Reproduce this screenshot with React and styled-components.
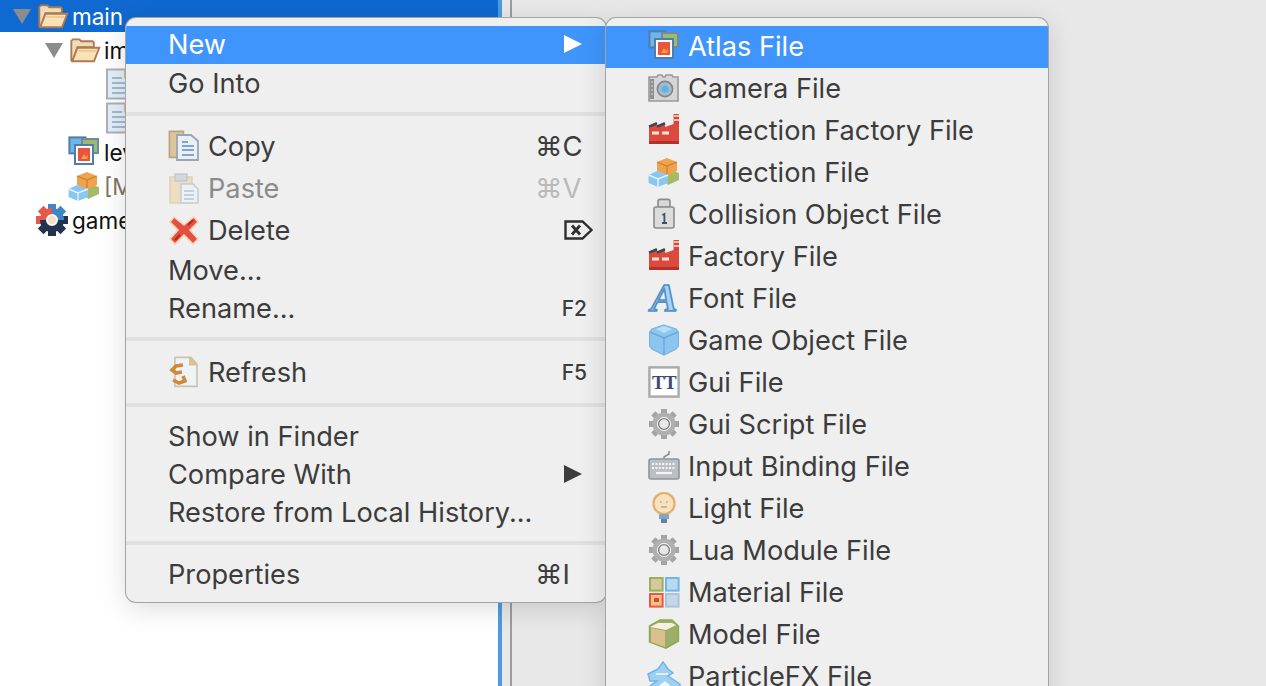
import React from "react";
import styled, { createGlobalStyle } from "styled-components";

const Global = createGlobalStyle`
  html, body { margin: 0; padding: 0; background: #e8e8e8; }
  body { font-family: Inter, "Noto Sans", "DejaVu Sans", sans-serif; }
`;

const Page = styled.div`
  position: relative;
  display: flex;
  width: 1266px;
  height: 686px;
  overflow: hidden;
  background: #e8e8e8;
`;
const TreePanel = styled.div`
  width: 498px;
  height: 100%;
  flex-shrink: 0;
  background: #fff;
  overflow: hidden;
`;
const TreeRow = styled.div`
  display: flex;
  align-items: center;
  gap: 4px;
  height: ${(p) => (p.$selected ? 32 : 34)}px;
  margin-bottom: ${(p) => (p.$selected ? 1 : 0)}px;
  padding-left: ${(p) => p.$indent}px;
  background: ${(p) => (p.$selected ? "#0f69d0" : "transparent")};
  color: ${(p) => (p.$selected ? "#fff" : p.$muted ? "#7d7466" : "#111")};
  font-size: 22.5px;
  white-space: nowrap;
`;
const Twisty = styled.span`
  width: 0;
  height: 0;
  margin-right: 3px;
  border-left: 9px solid transparent;
  border-right: 9px solid transparent;
  border-top: 15px solid #8c8c8c;
`;
const Stripe = styled.div`
  width: 4px;
  flex-shrink: 0;
  background: #4f9ae0;
`;
const Gutter = styled.div`
  width: 8px;
  flex-shrink: 0;
`;
const EditorEdge = styled.div`
  width: 2px;
  flex-shrink: 0;
  background: #9c9c9c;
`;

const Menu = styled.div`
  position: absolute;
  top: 18px;
  left: ${(p) => p.$left}px;
  width: ${(p) => p.$width}px;
  height: ${(p) => p.$height}px;
  box-sizing: border-box;
  padding-top: 8px;
  background: #efefef;
  border-radius: ${(p) => p.$radius};
  box-shadow: 0 0 0 1px #a4a4a4, 0 6px 28px rgba(0, 0, 0, 0.14);
  overflow: hidden;
`;
const Item = styled.div`
  display: flex;
  align-items: center;
  gap: 8px;
  box-sizing: border-box;
  height: ${(p) => p.$h}px;
  padding: 0 24px ${(p) => p.$lift ?? 0}px ${(p) => p.$left}px;
  background: ${(p) => (p.$active ? "#3f95fb" : "transparent")};
  color: ${(p) => (p.$active ? "#fff" : p.$disabled ? "#8b8b8b" : "#3c3c3c")};
  font-size: 27.2px;
  white-space: nowrap;
`;
const Name = styled.span`
  flex: 1;
`;
const Keys = styled.span`
  width: 47px;
  color: ${(p) => (p.$disabled ? "#bababa" : "#3c3c3c")};
  font-size: 27.5px;
`;
const FnKey = styled.span`
  color: #3c3c3c;
  font-size: 21px;
  font-weight: 500;
  margin-right: -5px;
`;
const Arrow = styled.span`
  width: 0;
  height: 0;
  border-top: 9px solid transparent;
  border-bottom: 9px solid transparent;
  border-left: 18px solid ${(p) => (p.$active ? "#fff" : "#3c3c3c")};
`;
const Sep = styled.div`
  height: ${(p) => p.$h}px;
  display: flex;
  align-items: center;
  &::before {
    content: "";
    flex: 1;
    height: 4px;
    background: #e0e0e0;
  }
`;
const Glyph = styled.svg`
  width: ${(p) => p.$size ?? 32}px;
  height: ${(p) => p.$size ?? 32}px;
  flex-shrink: 0;
  overflow: visible;
  opacity: ${(p) => p.$fade ?? 1};
`;
const KeyGlyph = styled(Glyph)`
  margin-right: -12px;
`;

const Icon = ({ children, ...rest }) => (
  <Glyph viewBox="0 0 16 16" {...rest}>
    {children}
  </Glyph>
);

const FolderOpen = (p) => (
  <Icon {...p}>
    <path d="M.7 13.5V3.2l.8-.9h3.5l1 1h6l.7.7v2.5H4L1.500 13.5z" fill="#efdcb8" stroke="#ad7a52" strokeWidth="1" />
    <path d="M1.200 14 4 6.800h11.600L12.800 14z" fill="#f8e2b6" stroke="#ad7a52" strokeWidth="1" />
    <path d="M4.500 8.500h9.500" stroke="#e8c58c" strokeWidth=".8" />
  </Icon>
);
const Doc = (p) => (
  <Icon {...p}>
    <path d="M1.500.7h9l3.500 3.500v11H1.500z" fill="#e6eef5" stroke="#a9b2bb" strokeWidth="1" />
    <path d="M10 .7h1l3 3.500v1h-4z" fill="#d9b98c" />
    <path d="M4 5h5M4 7.500h8M4 10h8M4 12.500h8" stroke="#9dbbd6" strokeWidth="1" />
  </Icon>
);
const Atlas = (p) => (
  <Icon {...p}>
    <rect x=".7" y=".7" width="8" height="8" fill="#6db5ea" stroke="#4e7fa8" />
    <rect x="7" y="1.500" width="8" height="7" fill="#9dbb6c" stroke="#6d89a3" />
    <rect x="3.500" y="4.500" width="9" height="9.500" fill="#fff" stroke="#4e7fa8" strokeWidth="1" />
    <rect x="5" y="6" width="6" height="6.500" fill="#e9543f" />
    <path d="M6.500 11.500 8 9l1 1.500.8-1.500v2.500z" fill="#f3a13c" />
  </Icon>
);
const Camera = (p) => (
  <Icon {...p}>
    <path d="M.5 2.500h4l.5-1h2l.5 1h1l.5-1h3l.5 1h2.500v12H.5z" fill="#d6d6d6" stroke="#999" strokeWidth=".8" />
    <rect x="1" y="3.500" width="2" height="10" fill="#8f8f8f" />
    <path d="M1.500 5h1M1.500 7h1M1.500 9h1M1.500 11h1" stroke="#ddd" strokeWidth=".6" />
    <circle cx="8.500" cy="8.500" r="3.800" fill="#a9bac9" stroke="#7b8793" strokeWidth=".8" />
    <circle cx="8.500" cy="8.500" r="1.800" fill="#5fb0ee" />
  </Icon>
);
const Factory = (p) => (
  <Icon {...p}>
    <path d="M12.800 0h2.700v6h-2.700z" fill="#d8433a" />
    <path d="M13 1h2.500M13 3h2.500" stroke="#f0c2a6" strokeWidth=".9" />
    <path d="M.5 6.500l4-1.500v1.500l4-1.500v1.500l4.300-1.500h2.700v10H.5z" fill="#dc4a3d" />
    <path d="M.5 6.300l4-1.700M4.500 6.300l4-1.700" stroke="#3f4650" strokeWidth="1.300" />
    <path d="M2 9.500h3.500M7 9.500h3.500" stroke="#fbe7d6" strokeWidth="1.600" />
    <rect x=".5" y="13.500" width="15" height="1.500" fill="#b03228" />
  </Icon>
);
const Boxes = (p) => (
  <Icon {...p}>
    <path d="M7 9.500 12 7.500l3.500 1v3.500L10 14.500z" fill="#a3bb63" />
    <path d="M4.500 3 9.500 1l5 2v4.500L9.500 10 4.500 7.500z" fill="#f0a24d" />
    <path d="M4.500 3 9.500 5l5-2M9.500 5v5" stroke="#c97f30" strokeWidth=".6" fill="none" />
    <path d="M.3 9.500 4.500 7.500 10 9.500v4l-5 2-4.700-2z" fill="#8ac6f2" />
    <path d="M.3 9.500 5 11.500 10 9.500M5 11.500v4" stroke="#e6f3fc" strokeWidth=".7" fill="none" />
  </Icon>
);
const Weight = (p) => (
  <Icon {...p}>
    <rect x="5" y=".7" width="6" height="4" rx="1" fill="#d8d8d8" stroke="#8b8b8b" strokeWidth=".8" />
    <rect x="3" y="4.500" width="10" height="10.500" rx="1" fill="#dcdcdc" stroke="#8b8b8b" strokeWidth=".8" />
    <path d="M7.200 8.500 8.200 8v4.500M7 12.500h2.500" stroke="#3f5169" strokeWidth=".9" fill="none" />
  </Icon>
);
const FontIcon = (p) => (
  <Icon {...p}>
    <text x="8" y="14.500" textAnchor="middle" fontFamily="'Liberation Serif', serif" fontStyle="italic" fontWeight="700" fontSize="20" fill="#a9d3f2" stroke="#4f8fc4" strokeWidth=".8">
      A
    </text>
  </Icon>
);
const Cube = (p) => (
  <Icon {...p}>
    <path d="M8 .5 14 2.500l1.200 1.500v7L14 12.500 8 15.500 2 12.500.8 11V4L2 2.500z" fill="#8cc6f0" stroke="#78b4e2" strokeWidth=".6" />
    <path d="M1 4 8 7l7-3M8 7v8.500" stroke="#6aa9dc" strokeWidth=".7" fill="none" />
    <path d="M4 2.500 8 1l4 1.500L8 4.500z" fill="#b7ddf7" />
  </Icon>
);
const GuiIcon = (p) => (
  <Icon {...p}>
    <rect x=".7" y=".7" width="14.600" height="14.600" fill="#fff" stroke="#a9a9a9" strokeWidth="1.200" />
    <text x="8" y="11.500" textAnchor="middle" fontFamily="'Liberation Serif', serif" fontWeight="700" fontSize="9.500" letterSpacing="-.3" fill="#3d4a78">
      TT
    </text>
  </Icon>
);
const Gear = (p) => (
  <Icon {...p}>
    {[0, 45, 90, 135, 180, 225, 270, 315].map((a) => (
      <rect key={a} x="6.500" y=".5" width="3" height="4" fill="#a4a4a4" transform={`rotate(${a} 8 8)`} />
    ))}
    <circle cx="8" cy="8" r="4.700" fill="none" stroke="#b0b0b0" strokeWidth="2.200" />
    <circle cx="8" cy="8" r="2.700" fill="#e8e8e8" stroke="#808080" strokeWidth=".7" />
  </Icon>
);
const Keyboard = (p) => (
  <Icon {...p}>
    <path d="M8 5V3.500L10.500 2V.5" stroke="#8f8f8f" fill="none" strokeWidth=".8" />
    <rect x=".5" y="4.500" width="15" height="10" rx="1" fill="#b9bfc5" stroke="#8f959b" strokeWidth=".8" />
    <path d="M2 7h12M2 9h12" stroke="#f4f4f4" strokeWidth="1" strokeDasharray="1 .7" />
    <path d="M4 11.500h8" stroke="#f4f4f4" strokeWidth="1.100" />
  </Icon>
);
const Bulb = (p) => (
  <Icon {...p}>
    <circle cx="8" cy="5.800" r="5.300" fill="#f6e2bd" stroke="#e3ad6d" strokeWidth="1.100" />
    <path d="M6 5h.8M9 5h.8M6.500 7.500h3" stroke="#d9b27e" strokeWidth=".9" />
    <rect x="5.500" y="11" width="5" height="2.500" fill="#7fa7c9" />
    <rect x="6.500" y="13.500" width="3" height="2" fill="#6a7f92" />
  </Icon>
);
const Material = (p) => (
  <Icon {...p}>
    <rect x="1" y="1" width="6.300" height="6.300" fill="#d7c79c" stroke="#97b15c" strokeWidth="1" />
    <rect x="9" y="1" width="6.300" height="6.300" fill="#bcd8ef" stroke="#6db5ea" strokeWidth="1" />
    <rect x="1" y="9" width="6.300" height="6.300" fill="#f3c47d" stroke="#e8574a" strokeWidth="1" />
    <rect x="9" y="9" width="6.300" height="6.300" fill="#c6d6e6" stroke="#a9c4dc" strokeWidth="1" />
    <rect x="3" y="11" width="2.500" height="2" fill="#d9483a" />
  </Icon>
);
const Model = (p) => (
  <Icon {...p}>
    <path d="M.8 4 6 1h6l3.200 3v7.500L9 15l-8.200-3z" fill="#9dad6a" stroke="#8dab55" strokeWidth=".8" />
    <path d="M1 4.500 5 2.500h7l2 1-5 2.500z" fill="#f7f1e0" />
    <path d="M1.500 5 8.500 6.500v8L1.500 12z" fill="#d9c08e" />
  </Icon>
);
const Particle = (p) => (
  <Icon {...p}>
    <path d="M0 7l5-2.500L7.500 1 10 4.500l2.500 2L10 8l6 4v3.500H2l-1-2.500 3.500-2.500H1z" fill="#9dd0f3" stroke="#6fb3e8" strokeWidth=".7" />
    <path d="M4 14l4.500-3.500 4 3.500z" fill="#eef7fd" />
    <path d="M4 7h6" stroke="#eef7fd" strokeWidth=".8" />
  </Icon>
);
const Project = (p) => (
  <Icon {...p}>
    {[
      [0, "#3f86c9"],
      [45, "#3f86c9"],
      [90, "#23334f"],
      [135, "#23334f"],
      [180, "#23334f"],
      [225, "#23334f"],
      [270, "#e8574a"],
      [315, "#e8574a"],
    ].map(([a, color]) => (
      <rect key={a} x="6" y="0" width="4" height="4.500" fill={color} transform={`rotate(${a} 8 8)`} />
    ))}
    <path d="M3.500 8A4.500 4.500 0 0 1 8 3.500" fill="none" stroke="#e8574a" strokeWidth="3" />
    <path d="M8 3.500A4.500 4.500 0 0 1 12.500 8" fill="none" stroke="#3f86c9" strokeWidth="3" />
    <path d="M12.500 8A4.500 4.500 0 0 1 3.500 8" fill="none" stroke="#23334f" strokeWidth="3" />
    <circle cx="8" cy="8" r="2.200" fill="#efe3c9" />
  </Icon>
);
const Copy = (p) => (
  <Icon {...p}>
    <path d="M.7.7h7v13H.7z" fill="#d9c59e" stroke="#b9a47c" strokeWidth=".8" />
    <path d="M4.500 2.500h7l3.500 3v9.500H4.500z" fill="#e9eff5" stroke="#98a5b3" strokeWidth=".9" />
    <path d="M7 6h3M7 8h6M7 10h6M7 12.500h6" stroke="#7fa6c9" strokeWidth=".9" />
  </Icon>
);
const Paste = (p) => (
  <Icon $fade={0.55} {...p}>
    <rect x="1" y="2.500" width="11" height="13" fill="#eccf9f" stroke="#d4b98b" strokeWidth=".8" />
    <rect x="3.500" y="1" width="6" height="3.500" fill="#bfc5cc" stroke="#9aa2aa" strokeWidth=".6" />
    <path d="M6.500 6h6l2.500 2.500v7H6.500z" fill="#eef3f7" stroke="#a7b2bc" strokeWidth=".8" />
    <path d="M8 9.500h5M8 11.500h5M8 13.500h5" stroke="#7fa6c9" strokeWidth=".8" />
  </Icon>
);
const DeleteX = (p) => (
  <Icon {...p}>
    <path d="M3 1.500 8 5.500l5-4 2 2.500-4 4 4 4.500-2.500 2.500L8 10.500l-4.500 4.500L1 12.500 5 8 1 4z" fill="#e4503f" stroke="#f2d3b3" strokeWidth=".8" />
    <path d="M3.500 13 6 10.500M10 5.500 12.500 3" stroke="#b8281f" strokeWidth="1" />
  </Icon>
);
const Refresh = (p) => (
  <Icon {...p}>
    <path d="M3.500.7h8l3 3.500v11h-11z" fill="#eef3f7" stroke="#c9c2ae" strokeWidth=".8" />
    <path d="M10.500.7h1l3 3v1h-4z" fill="#dcc08f" />
    <path d="M7.500 4.500 4 5 2 7l2 1.500 3-.5M2.500 12l3 1.500 3-1-1-2.500" fill="none" stroke="#d1883b" strokeWidth="1.800" />
  </Icon>
);
const DeleteKey = () => (
  <KeyGlyph $size={30} viewBox="0 0 30 22">
    <path d="M1.500 2.500h17l9 8.500-9 8.500h-17z" fill="none" stroke="#2f2f2f" strokeWidth="2.400" />
    <path d="M8 6.500l8 9M16 6.500l-8 9" stroke="#2f2f2f" strokeWidth="2.800" />
  </KeyGlyph>
);

const fileTypes = [
  ["Atlas File", Atlas],
  ["Camera File", Camera],
  ["Collection Factory File", Factory],
  ["Collection File", Boxes],
  ["Collision Object File", Weight],
  ["Factory File", Factory],
  ["Font File", FontIcon],
  ["Game Object File", Cube],
  ["Gui File", GuiIcon],
  ["Gui Script File", Gear],
  ["Input Binding File", Keyboard],
  ["Light File", Bulb],
  ["Lua Module File", Gear],
  ["Material File", Material],
  ["Model File", Model],
  ["ParticleFX File", Particle],
];

export default function App() {
  return (
    <Page>
      <Global />
      <TreePanel>
        <TreeRow $selected $indent={13}>
          <Twisty />
          <FolderOpen $size={30} />
          main
        </TreeRow>
        <TreeRow $indent={45}>
          <Twisty />
          <FolderOpen $size={30} />
          images
        </TreeRow>
        <TreeRow $indent={104}>
          <Doc />
        </TreeRow>
        <TreeRow $indent={104}>
          <Doc />
        </TreeRow>
        <TreeRow $indent={68}>
          <Atlas />
          level.atlas
        </TreeRow>
        <TreeRow $indent={68} $muted>
          <Boxes />
          [Main]
        </TreeRow>
        <TreeRow $indent={36}>
          <Project />
          game.project
        </TreeRow>
      </TreePanel>
      <Stripe />
      <Gutter />
      <EditorEdge />

      <Menu $left={126} $width={480} $height={584} $radius="10px">
        <Item $h={38} $left={42} $lift={2} $active>
          <Name>New</Name>
          <Arrow $active />
        </Item>
        <Item $h={38} $left={42}>
          <Name>Go Into</Name>
        </Item>
        <Sep $h={23} />
        <Item $h={42} $left={42}>
          <Copy />
          <Name>Copy</Name>
          <Keys>⌘C</Keys>
        </Item>
        <Item $h={42} $left={42} $disabled>
          <Paste />
          <Name>Paste</Name>
          <Keys $disabled>⌘V</Keys>
        </Item>
        <Item $h={42} $left={42}>
          <DeleteX />
          <Name>Delete</Name>
          <DeleteKey />
        </Item>
        <Item $h={38} $left={42}>
          <Name>Move...</Name>
        </Item>
        <Item $h={38} $left={42}>
          <Name>Rename...</Name>
          <FnKey>F2</FnKey>
        </Item>
        <Sep $h={24} />
        <Item $h={42} $left={42}>
          <Refresh />
          <Name>Refresh</Name>
          <FnKey>F5</FnKey>
        </Item>
        <Sep $h={24} />
        <Item $h={38} $left={42}>
          <Name>Show in Finder</Name>
        </Item>
        <Item $h={38} $left={42}>
          <Name>Compare With</Name>
          <Arrow />
        </Item>
        <Item $h={38} $left={42}>
          <Name>Restore from Local History...</Name>
        </Item>
        <Sep $h={24} />
        <Item $h={38} $left={42}>
          <Name>Properties</Name>
          <Keys>⌘I</Keys>
        </Item>
      </Menu>

      <Menu $left={606} $width={442} $height={700} $radius="10px 10px 0 0">
        {fileTypes.map(([label, FileIcon], i) => (
          <Item key={label} $h={42} $left={42} $lift={2} $active={i === 0}>
            <FileIcon />
            <Name>{label}</Name>
          </Item>
        ))}
      </Menu>
    </Page>
  );
}
